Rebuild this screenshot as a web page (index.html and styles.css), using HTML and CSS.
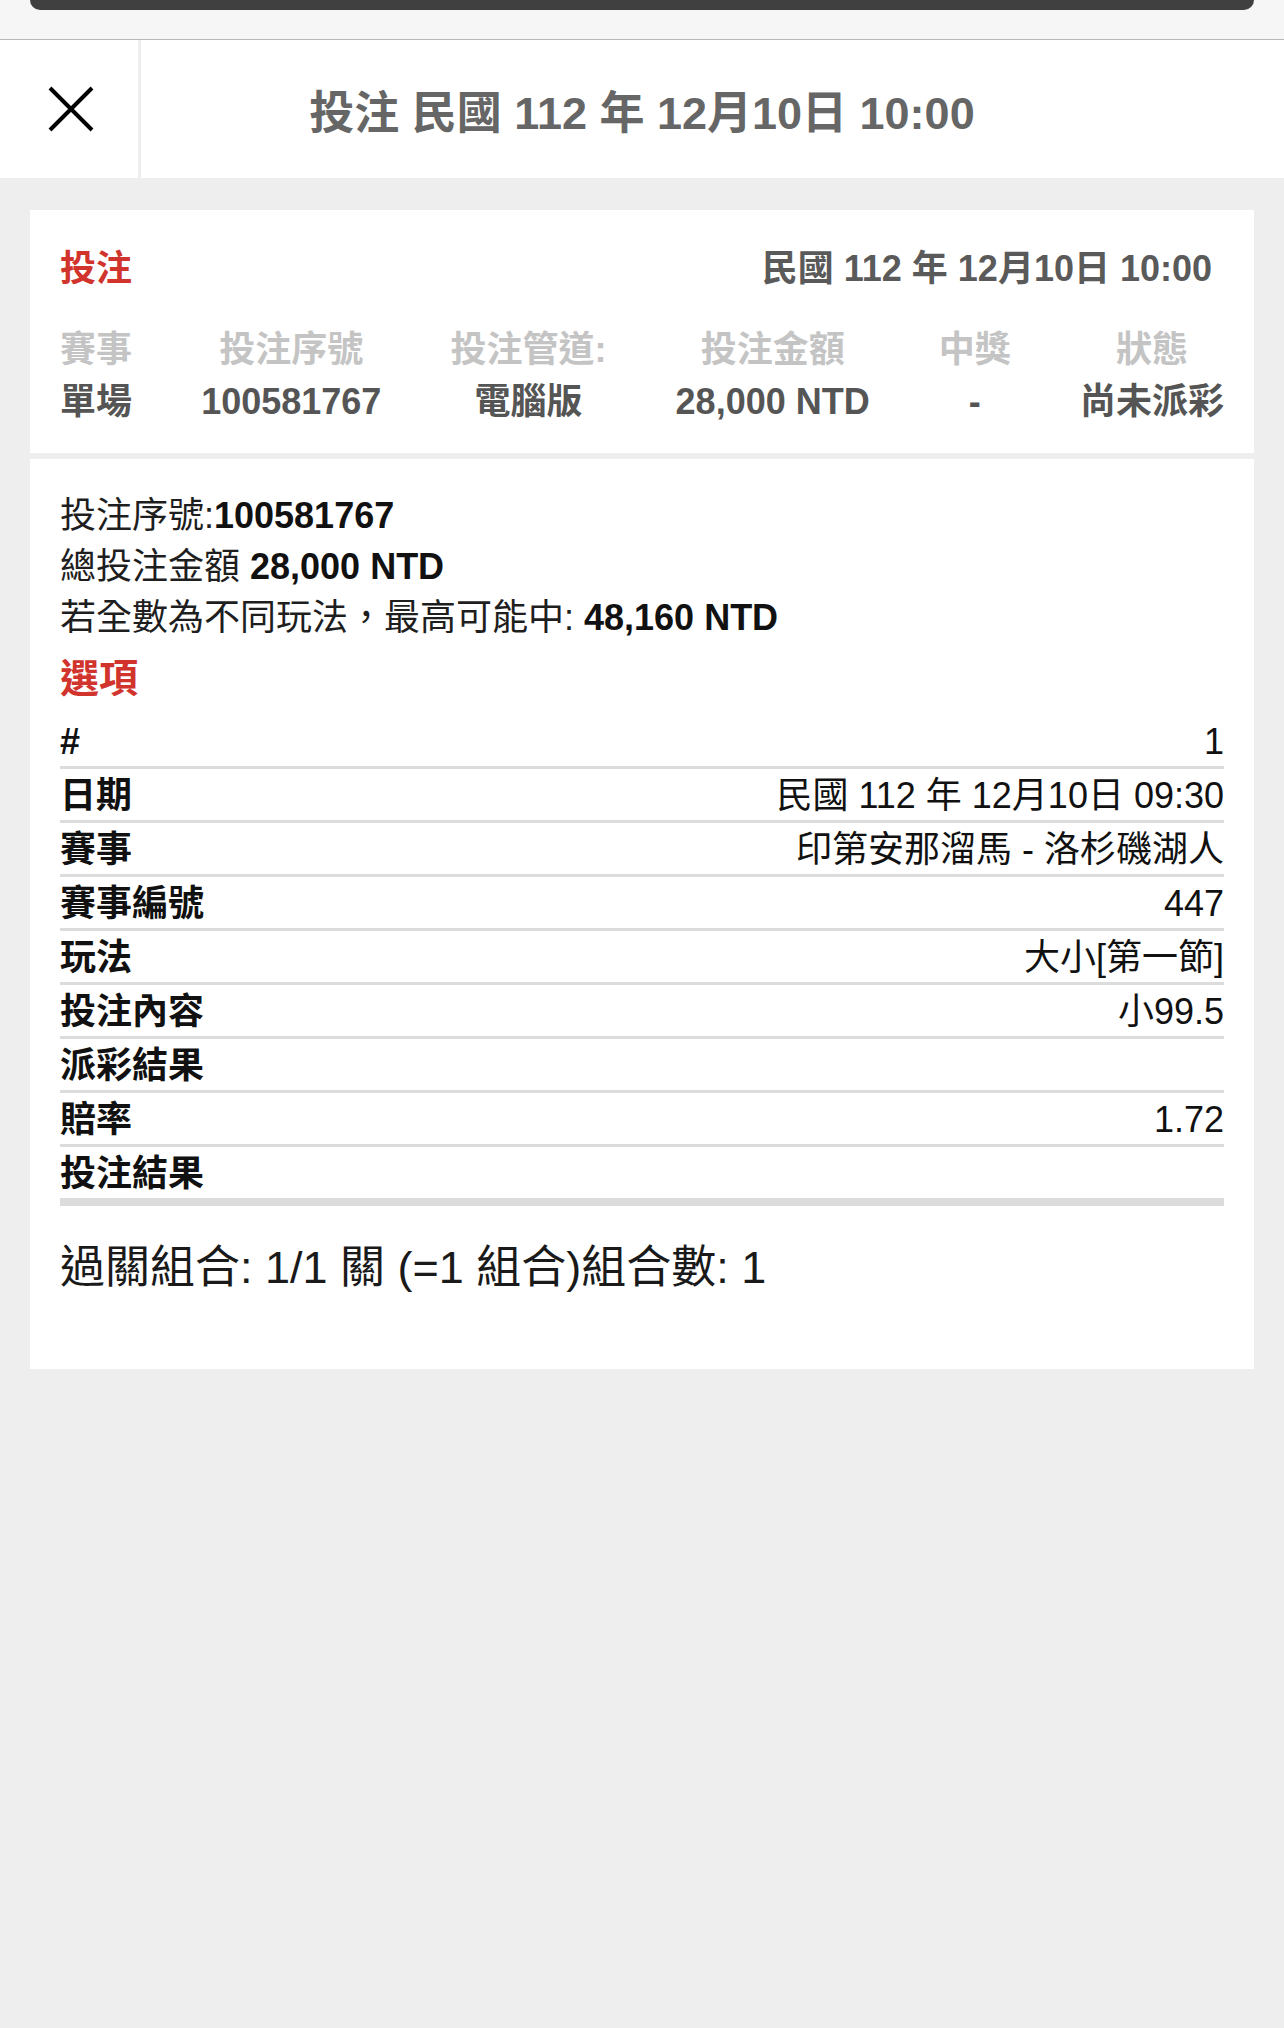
FILE: index.html
```html
<!DOCTYPE html>
<html lang="zh-Hant">
<head>
<meta charset="utf-8">
<title>投注</title>
<link rel="stylesheet" href="styles.css">
</head>
<body>
<div class="topbar"><div class="notch"></div></div>
<header class="nav">
  <button class="close" aria-label="關閉">
    <svg width="46" height="46" viewBox="0 0 46 46"><path d="M2 2 L44 44 M44 2 L2 44" stroke="#000" stroke-width="4" fill="none"/></svg>
  </button>
  <h1 class="title">投注 民國 112 年 12月10日 10:00</h1>
</header>
<main class="content">
  <section class="panel summary">
    <div class="summary-head">
      <span class="tag">投注</span>
      <span class="date">民國 112 年 12月10日 10:00</span>
    </div>
    <div class="cols">
      <div class="col"><div class="lbl">賽事</div><div class="val">單場</div></div>
      <div class="col"><div class="lbl">投注序號</div><div class="val">100581767</div></div>
      <div class="col"><div class="lbl">投注管道:</div><div class="val">電腦版</div></div>
      <div class="col"><div class="lbl">投注金額</div><div class="val">28,000 NTD</div></div>
      <div class="col"><div class="lbl">中獎</div><div class="val">-</div></div>
      <div class="col"><div class="lbl">狀態</div><div class="val">尚未派彩</div></div>
    </div>
  </section>
  <section class="panel detail">
    <p class="line">投注序號:<b>100581767</b></p>
    <p class="line">總投注金額 <b>28,000 NTD</b></p>
    <p class="line">若全數為不同玩法，最高可能中: <b>48,160 NTD</b></p>
    <h2 class="options">選項</h2>
    <table class="opt-table">
      <tr><th>#</th><td>1</td></tr>
      <tr><th>日期</th><td>民國 112 年 12月10日 09:30</td></tr>
      <tr><th>賽事</th><td>印第安那溜馬 - 洛杉磯湖人</td></tr>
      <tr><th>賽事編號</th><td>447</td></tr>
      <tr><th>玩法</th><td>大小[第一節]</td></tr>
      <tr><th>投注內容</th><td>小99.5</td></tr>
      <tr><th>派彩結果</th><td></td></tr>
      <tr><th>賠率</th><td>1.72</td></tr>
      <tr class="last"><th>投注結果</th><td></td></tr>
    </table>
    <p class="combo">過關組合: 1/1 關 (=1 組合)組合數: 1</p>
  </section>
</main>
</body>
</html>
```
FILE: styles.css
```css
* { box-sizing: border-box; }

html, body {
  margin: 0;
  padding: 0;
}

body {
  background: #eeeeee;
  font-family: "Liberation Sans", "Noto Sans CJK TC", sans-serif;
  color: #1a1a1a;
  min-height: 2028px;
}

.topbar {
  height: 39px;
  background: #f6f6f6;
  padding: 0 30px;
}

.notch {
  height: 10px;
  background: #404040;
  border-radius: 0 0 28px 28px;
}

.nav {
  display: flex;
  height: 139px;
  background: #ffffff;
  border-top: 1px solid #b8b8b8;
}

.close {
  width: 141px;
  flex: none;
  display: flex;
  align-items: center;
  justify-content: center;
  padding: 0 0 0 4px;
  margin: 0;
  background: #ffffff;
  border: none;
  border-right: 3px solid #eeeeee;
}

.close svg { display: block; }

.title {
  flex: 1;
  margin: 0;
  padding-right: 141px;
  display: flex;
  align-items: center;
  justify-content: center;
  font-size: 45px;
  font-weight: 700;
  color: #666666;
  white-space: nowrap;
}

.content {
  padding: 32px 30px;
  display: flex;
  flex-direction: column;
  gap: 6px;
}

.panel {
  background: #ffffff;
}

.summary {
  padding: 33px 30px 25px;
}

.summary-head {
  display: flex;
  justify-content: space-between;
  align-items: center;
  height: 51px;
  font-size: 36px;
  font-weight: 700;
  line-height: 51px;
  padding-right: 12px;
}

.tag { color: #d0342c; }
.date { color: #5a5a5a; }

.cols {
  margin-top: 30px;
  display: flex;
  justify-content: space-between;
  font-size: 36px;
  font-weight: 700;
  line-height: 52px;
}

.col {
  text-align: center;
  white-space: nowrap;
}

.lbl { color: #c4c4c4; height: 52px; }
.val { color: #555555; height: 52px; }

.detail {
  padding: 31px 30px 76px;
}

.line {
  margin: 0;
  height: 51px;
  font-size: 36px;
  line-height: 51px;
  color: #1e1e1e;
  white-space: nowrap;
}

.line b { font-weight: 700; color: #111111; }

.options {
  margin: 10px 0 0;
  height: 51px;
  font-size: 39px;
  line-height: 51px;
  font-weight: 700;
  color: #d0342c;
}

.opt-table {
  margin-top: 11px;
  width: 100%;
  border-collapse: collapse;
  font-size: 36px;
  color: #111111;
}

.opt-table tr {
  border-bottom: 3px solid #dcdcdc;
}

.opt-table tr.last {
  border-bottom: 8px solid #dcdcdc;
}

.opt-table th,
.opt-table td {
  padding: 2px 0 0;
  height: 51px;
  line-height: 49px;
  white-space: nowrap;
}

.opt-table th {
  text-align: left;
  font-weight: 700;
}

.opt-table td {
  text-align: right;
  font-weight: 400;
}

.combo {
  margin: 36px 0 0;
  height: 51px;
  font-size: 45px;
  line-height: 51px;
  color: #1a1a1a;
  white-space: nowrap;
}
```
